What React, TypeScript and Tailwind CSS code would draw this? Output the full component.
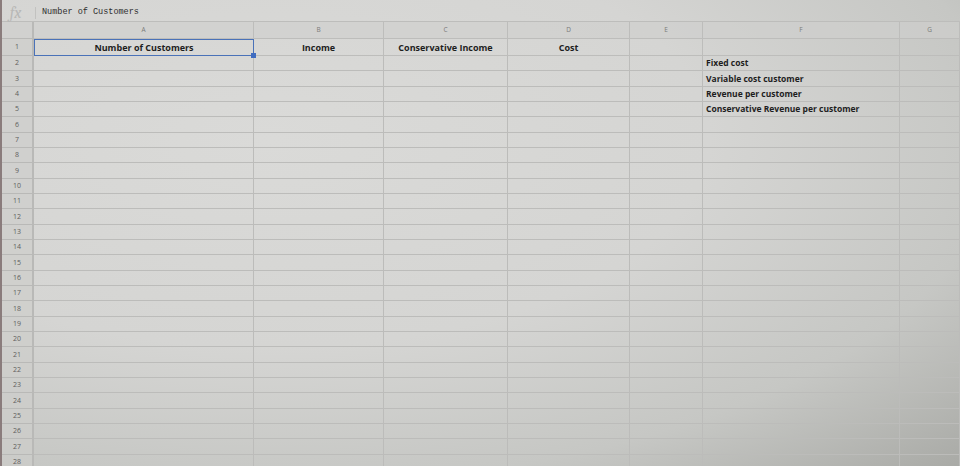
const COLS = ["A", "B", "C", "D", "E", "F", "G"];
const ROW_COUNT = 28;

const ROW1: Record<string, string> = {
  A: "Number of Customers",
  B: "Income",
  C: "Conservative Income",
  D: "Cost",
};

const SIDE_LABELS: Record<number, string> = {
  2: "Fixed cost",
  3: "Variable cost customer",
  4: "Revenue per customer",
  5: "Conservative Revenue per customer",
};

function Cell({ col, row }: { col: string; row: number }) {
  if (row === 1) {
    const selected = col === "A";
    return (
      <div
        className={
          selected
            ? "relative flex h-[17px] items-center justify-center border-[1.5px] border-[#4a72b8] pt-px text-[9px] font-bold text-[#1e1e1e]"
            : "flex h-[17px] items-center justify-center border-b border-r border-[#bdbdbb] pt-px text-[9px] font-bold text-[#1e1e1e]"
        }
      >
        {ROW1[col] ?? ""}
        {selected && <span className="absolute -bottom-[3px] -right-[3px] h-[5px] w-[5px] bg-[#3f6cc0]" />}
      </div>
    );
  }
  const label = col === "F" ? SIDE_LABELS[row] : undefined;
  return (
    <div className="flex h-[15.33px] items-center border-b border-r border-[#bcbcba] pl-[3px] pt-px text-[8.5px] font-bold text-[#1e1e1e]">
      {label ?? ""}
    </div>
  );
}

export default function App() {
  const rows = Array.from({ length: ROW_COUNT }, (_, i) => i + 1);
  return (
    <div
      className="h-[466px] w-[960px] overflow-hidden border-l-2 border-[#8a7c7c] bg-[radial-gradient(ellipse_at_28%_30%,#dadad8_0%,#d5d5d3_45%,#c6c7c4_75%,#a9aaa6_100%)]"
      style={{ fontFamily: '"Open Sans", "Liberation Sans", sans-serif' }}
    >
      <div className="flex h-[22px] items-center border-b border-[#bdbdbb] pt-[4px]">
        <div className="flex w-[33px] items-center justify-center pr-[6px]">
          <span className="font-serif text-[16px] italic leading-none text-[#b8b8b6]">fx</span>
        </div>
        <div className="h-[12px] w-px bg-[#c2c2c0]" />
        <span className="pl-[6px] text-[8.5px] text-[#2e2e2e]" style={{ fontFamily: '"Liberation Mono", monospace' }}>
          Number of Customers
        </span>
      </div>

      <div className="grid grid-cols-[32px_220px_130px_124px_122px_73px_197px_1fr]">
        <div className="h-[17px] border-b border-r-2 border-[#b9b9b7] bg-[#cfcfcd]/70" />
        {COLS.map((c) => (
          <div
            key={c}
            className="flex h-[17px] items-center justify-center border-b border-r border-[#bdbdbb] bg-[#cfcfcd]/60 text-[6.5px] text-[#7a7a78]"
          >
            {c}
          </div>
        ))}

        {rows.map((r) => (
          <div key={r} className="contents">
            <div
              className={
                (r === 1 ? "h-[17px]" : "h-[15.33px]") +
                " flex items-center justify-center border-b border-r-2 border-[#b9b9b7] bg-[#cdcdcb]/70 pt-px text-[7px] text-[#5e5e5c]"
              }
            >
              {r}
            </div>
            {COLS.map((c) => (
              <Cell key={c} col={c} row={r} />
            ))}
          </div>
        ))}
      </div>
    </div>
  );
}
